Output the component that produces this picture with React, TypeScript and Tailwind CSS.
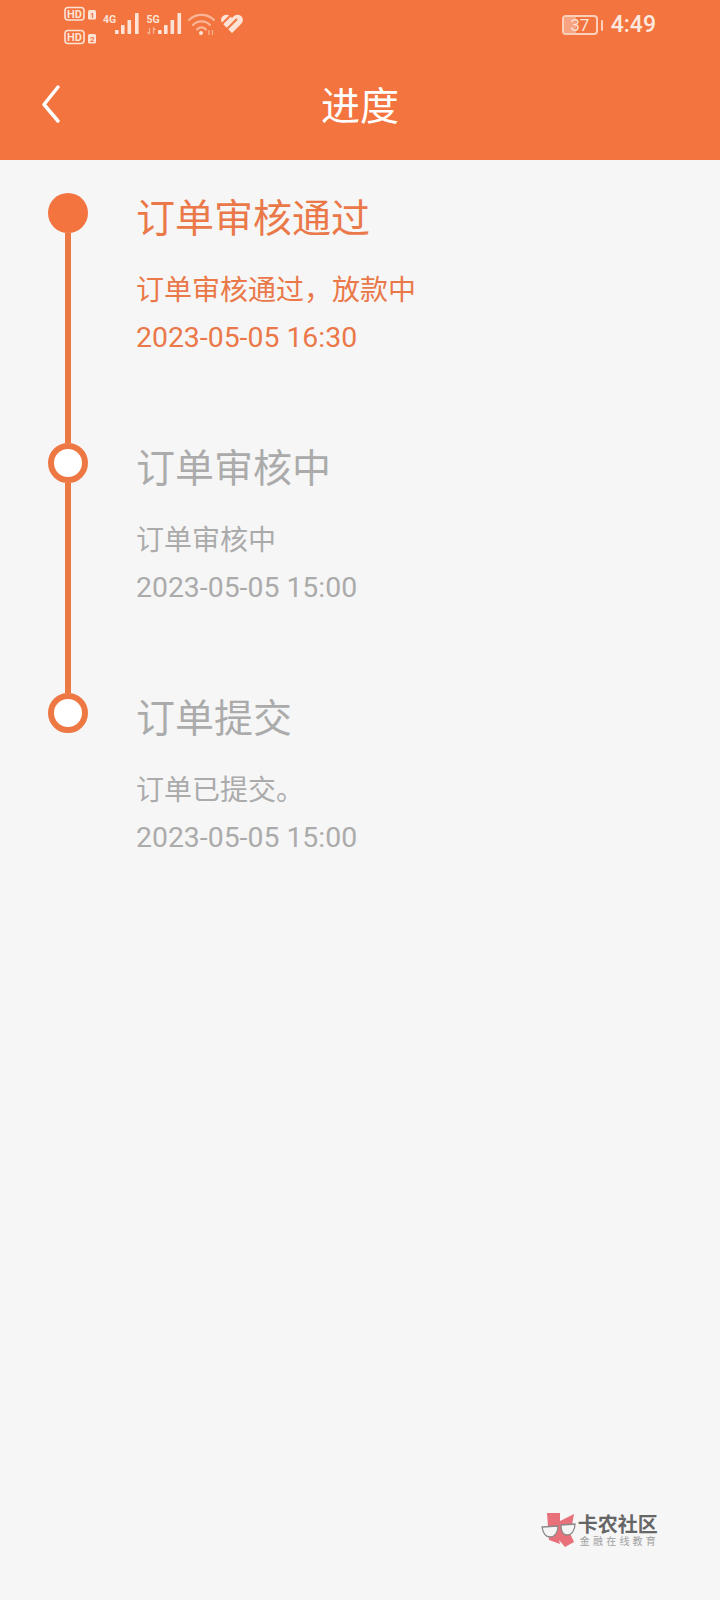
const font = { fontFamily: '"Noto Sans CJK SC", Roboto, sans-serif' };
const roboto = { fontFamily: 'Roboto, sans-serif' };

function Bars({ xs }: { xs: number[] }) {
  const tops = [30, 25, 20, 13];
  return (
    <g fill="#fde3d6">
      {xs.map((x, i) => (
        <rect key={i} x={x} y={tops[i]} width={3.6} height={34 - tops[i]} rx={0.5} />
      ))}
    </g>
  );
}

function StatusIcons() {
  return (
    <svg width="190" height="50" viewBox="64 0 190 50" className="shrink-0">
      <g fill="none" stroke="#fde3d6" strokeWidth="1.6">
        <rect x="65" y="7.500" width="19" height="12.500" rx="3" />
        <rect x="65" y="30.500" width="19" height="13" rx="3" />
      </g>
      <g fill="#fde3d6">
        <rect x="88" y="10" width="8" height="9.500" rx="1.500" />
        <rect x="88" y="34" width="8" height="9.500" rx="1.500" />
      </g>
      <g fill="#fde3d6" fontFamily="Roboto, sans-serif" fontWeight="700">
        <text x="67" y="18" fontSize="11">HD</text>
        <text x="67" y="41" fontSize="11">HD</text>
        <text x="103" y="23" fontSize="10.500">4G</text>
        <text x="146.500" y="23" fontSize="10.500">5G</text>
      </g>
      <g fill="#f5743f" fontFamily="Roboto, sans-serif" fontWeight="700">
        <text x="90" y="17.500" fontSize="8">1</text>
        <text x="90" y="41.500" fontSize="8">2</text>
      </g>
      <Bars xs={[115, 121, 127.500, 135]} />
      <Bars xs={[158, 164, 170.500, 177.500]} />
      <path d="M149.500 28v6M147.500 32l2 2M153.500 34v-6l2 2" stroke="#f9b595" strokeWidth="1.200" fill="none" />
      <g fill="none" stroke="#f9b595" strokeWidth="2.200" strokeLinecap="round">
        <path d="M189 20a18 18 0 0 1 25 0" />
        <path d="M193 25a12 12 0 0 1 17 0" />
        <path d="M197 29.500a6 6 0 0 1 9 0" />
      </g>
      <circle cx="201" cy="33" r="2" fill="#fde3d6" />
      <path d="M209 30v5M212.500 35v-5" stroke="#f9b595" strokeWidth="1.200" fill="none" />
      <path d="M232 33 223 24c-2.500-2.500-2.500-6 0-8 2-1.800 5-1.800 7 0l2 2 2-2c2-1.800 5-1.800 7 0 2.500 2 2.500 5.500 0 8z" fill="#fde3d6" />
      <path d="M222 24 232 14M227 29 237 19" stroke="#f5743f" strokeWidth="2" fill="none" />
    </svg>
  );
}

function Battery() {
  return (
    <div className="flex items-center gap-[3px]">
      <div className="relative w-[36px] h-[20px] rounded-[4px] border-2 border-[#fbd0bb] overflow-hidden flex items-center justify-center">
        <div className="absolute left-0 top-0 bottom-0 w-[12px] bg-[#f8a482]" />
        <span className="relative text-[17px] leading-none text-[#fde3d6]" style={roboto}>37</span>
      </div>
      <div className="w-[2px] h-[11px] rounded-sm bg-[#fbd0bb]" />
    </div>
  );
}

function Step({ title, desc, date, active, last }: { title: string; desc: string; date: string; active?: boolean; last?: boolean }) {
  const color = active ? 'text-[#ea7849]' : 'text-[#ababab]';
  return (
    <div className="flex h-[250px]">
      <div className="w-[40px] flex flex-col items-center shrink-0">
        {active ? (
          <div className="w-[40px] h-[40px] rounded-full bg-[#f3743f] shrink-0" />
        ) : (
          <div className="w-[40px] h-[40px] rounded-full bg-white border-[6px] border-[#ee7844] shrink-0" />
        )}
        {!last && <div className="w-[6px] flex-1 bg-[#ec7844]" />}
      </div>
      <div className={`ml-[48px] ${color}`}>
        <div className="text-[39px] leading-[50px] -mt-[3px]">{title}</div>
        <div className="text-[28px] leading-[40px] mt-[28px]">{desc}</div>
        <div className="text-[28.4px] leading-[40px] mt-[10px]" style={roboto}>{date}</div>
      </div>
    </div>
  );
}

function Logo() {
  return (
    <div className="flex items-center gap-[1px]">
      <svg width="36" height="36" viewBox="0 0 36 36">
        <path d="M6 1H19V9L33 2 31 13 27 17 33 30 24 35 18 28 19 32 8 28z" fill="#e8707a" />
        <g fill="#f5f5f5" stroke="#8a8a8a" strokeWidth="1.300">
          <path d="M1 15 17 14C17 20 14 25 9 25 4 25 2 21 1 15z" />
          <path d="M20 13 34 12C34 18 31 23 26 23 22 23 20 19 20 13z" />
        </g>
      </svg>
      <div className="flex flex-col items-start">
        <div className="text-[20px] leading-[20px] font-bold text-[#666666]">卡农社区</div>
        <div className="text-[10px] leading-[12px] text-[#a0a0a0] tracking-[3.2px] ml-[2px] mt-[1px]">金融在线教育</div>
      </div>
    </div>
  );
}

export default function App() {
  return (
    <div className="w-[720px] h-[1600px] bg-[#f6f6f6] flex flex-col overflow-hidden" style={font}>
      <header className="h-[160px] bg-[#f3743f] shrink-0 flex flex-col">
        <div className="h-[50px] pl-[64px] pr-[64px] flex items-start justify-between">
          <StatusIcons />
          <div className="flex items-center gap-[8px] h-[50px]">
            <Battery />
            <span className="text-[23px] font-medium text-[#fde9df]" style={roboto}>4:49</span>
          </div>
        </div>
        <div className="flex-1 relative flex items-center justify-center pb-[4px]">
          <svg className="absolute left-[41px] top-[34px]" width="20" height="40" viewBox="0 0 20 40" fill="none" stroke="#ffffff" strokeWidth="3.500" strokeLinecap="round" strokeLinejoin="round">
            <path d="M17 3 3 20.500 17 37" />
          </svg>
          <span className="text-[39px] leading-[50px] text-white">进度</span>
        </div>
      </header>
      <main className="flex-1 pl-[48px] pt-[33px] flex flex-col relative">
        <Step active title="订单审核通过" desc="订单审核通过，放款中" date="2023-05-05 16:30" />
        <Step title="订单审核中" desc="订单审核中" date="2023-05-05 15:00" />
        <Step last title="订单提交" desc="订单已提交。" date="2023-05-05 15:00" />
        <div className="absolute right-[61px] bottom-[52px]">
          <Logo />
        </div>
      </main>
    </div>
  );
}
